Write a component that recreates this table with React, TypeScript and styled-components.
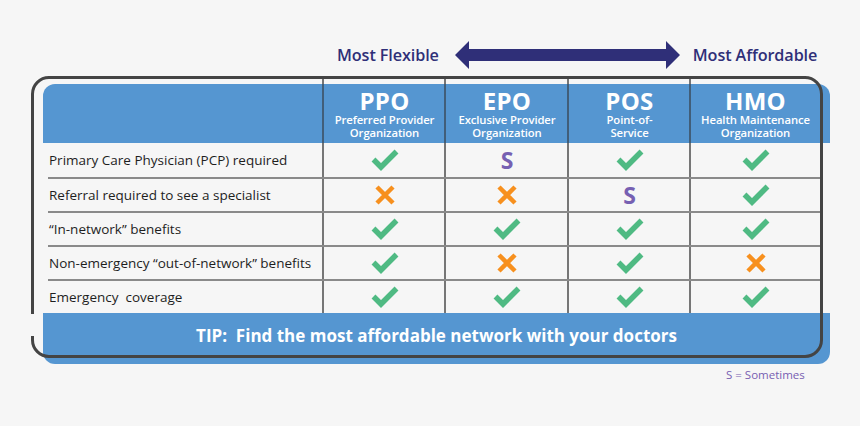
import React from "react";
import styled, { createGlobalStyle } from "styled-components";

const GlobalStyle = createGlobalStyle`
  html, body { margin: 0; padding: 0; background: #f6f6f6; }
  body { font-family: "Open Sans", "Liberation Sans", sans-serif; }
`;

const BLUE = "#5596d1";
const BG = "#f6f6f6";
const NAVY = "#2f2f78";
const GREEN = "#4fba83";
const ORANGE = "#f7901e";
const PURPLE = "#7660b2";
const VLINE = "#767676";
const HLINE = "#8a8a8a";

const COLS = "280px 122px 123px 122px 130px";

const Page = styled.div`
  width: 860px;
  height: 426px;
  padding-top: 40px;
  box-sizing: border-box;
  overflow: hidden;
`;

const Legend = styled.div`
  display: flex;
  align-items: center;
  height: 30px;
  padding-left: 337px;
`;

const LegendText = styled.span`
  font-size: 16.2px;
  font-weight: 600;
  color: ${NAVY};
  letter-spacing: -0.1px;
`;

const ArrowSvg = styled.svg`
  display: block;
  margin: 0 13px 0 16px;
`;

const TableWrap = styled.div`
  position: relative;
  margin: 14px 0 0 43px;
  width: 787px;
`;

const Frame = styled.div`
  position: absolute;
  left: -12px;
  top: -8px;
  width: 792px;
  height: 282px;
  box-sizing: border-box;
  border: 3px solid #444;
  border-radius: 18px;
  pointer-events: none;
  z-index: 3;
`;

const FrameGap = styled.div`
  position: absolute;
  left: -14px;
  top: 230px;
  width: 6px;
  height: 22px;
  background: ${BG};
  z-index: 4;
`;

const Header = styled.div`
  display: grid;
  grid-template-columns: ${COLS};
  padding-right: 10px;
  height: 59px;
  background: ${BLUE};
  border-radius: 12px 12px 0 0;
`;

const HeadCell = styled.div<{ $first?: boolean }>`
  position: relative;
  display: flex;
  flex-direction: column;
  align-items: center;
  color: #fff;
  padding-top: 4px;
  ${(p) =>
    !p.$first &&
    `
    border-left: 2px solid rgba(50,50,50,0.55);
    margin-left: -1px;
    &::before {
      content: "";
      position: absolute;
      left: -2px;
      top: -6px;
      width: 2px;
      height: 6px;
      background: ${VLINE};
    }
  `}
`;

const Plan = styled.div`
  font-size: 24px;
  font-weight: 700;
  line-height: 25px;
  letter-spacing: 0.3px;
`;

const PlanSub = styled.div`
  font-size: 11.3px;
  font-weight: 600;
  line-height: 13px;
  text-align: center;
  letter-spacing: -0.1px;
  white-space: pre;
`;

const Body = styled.div`
  display: flex;
  flex-direction: column;
`;

const Row = styled.div<{ $h: number; $last?: boolean }>`
  display: grid;
  grid-template-columns: 275px 122px 123px 122px 130px;
  height: ${(p) => p.$h}px;
  margin: 0 10px 0 5px;
  border-bottom: ${(p) => (p.$last ? "none" : `2px solid ${HLINE}`)};
  box-sizing: border-box;
`;

const Label = styled.div`
  display: flex;
  align-items: center;
  padding-left: 1px;
  font-size: 13.5px;
  color: #1e1e1e;
  white-space: pre;
`;

const Cell = styled.div`
  display: flex;
  align-items: center;
  justify-content: center;
  border-left: 2px solid ${VLINE};
  margin-left: -1px;
`;

const Sometimes = styled.span`
  font-size: 23px;
  font-weight: 700;
  color: ${PURPLE};
  line-height: 1;
`;

const Tip = styled.div`
  height: 51px;
  background: ${BLUE};
  border-radius: 0 0 12px 12px;
  display: flex;
  align-items: center;
  justify-content: center;
  color: #fff;
  font-size: 17px;
  font-weight: 700;
  white-space: pre;
  padding-bottom: 6px;
  box-sizing: border-box;
`;

const Note = styled.div`
  margin: 3px 0 0 726px;
  font-size: 11.5px;
  color: ${PURPLE};
`;

type Mark = "y" | "n" | "s";

const Check = () => (
  <svg width="28" height="22" viewBox="0 0 28 22">
    <path d="M2.5 10.5 L10 18 L25.5 2.5" fill="none" stroke={GREEN} strokeWidth="5.5" strokeLinejoin="miter" />
  </svg>
);

const Cross = () => (
  <svg width="20" height="20" viewBox="0 0 20 20">
    <path d="M2 2 L18 18 M18 2 L2 18" fill="none" stroke={ORANGE} strokeWidth="4.5" />
  </svg>
);

const MarkIcon = ({ m }: { m: Mark }) =>
  m === "y" ? <Check /> : m === "n" ? <Cross /> : <Sometimes>S</Sometimes>;

const plans = [
  { name: "PPO", sub: "Preferred Provider\nOrganization" },
  { name: "EPO", sub: "Exclusive Provider\nOrganization" },
  { name: "POS", sub: "Point-of-\nService" },
  { name: "HMO", sub: "Health Maintenance\nOrganization" },
];

const rows: { label: string; marks: Mark[]; h: number }[] = [
  { label: "Primary Care Physician (PCP) required", marks: ["y", "s", "y", "y"], h: 36 },
  { label: "Referral required to see a specialist", marks: ["n", "n", "s", "y"], h: 34 },
  { label: "\u201cIn-network\u201d benefits", marks: ["y", "y", "y", "y"], h: 34 },
  { label: "Non-emergency \u201cout-of-network\u201d benefits", marks: ["y", "n", "y", "n"], h: 34 },
  { label: "Emergency  coverage", marks: ["y", "y", "y", "y"], h: 32 },
];

export default function App() {
  return (
    <>
      <GlobalStyle />
      <Page>
        <Legend>
          <LegendText>Most Flexible</LegendText>
          <ArrowSvg width="225" height="30" viewBox="0 0 225 30">
            <polygon
              points="0,15 14,1 14,9 211,9 211,1 225,15 211,29 211,21 14,21 14,29"
              fill={NAVY}
            />
          </ArrowSvg>
          <LegendText>Most Affordable</LegendText>
        </Legend>
        <TableWrap>
          <Frame />
          <FrameGap />
          <Header>
            <HeadCell $first />
            {plans.map((p) => (
              <HeadCell key={p.name}>
                <Plan>{p.name}</Plan>
                <PlanSub>{p.sub}</PlanSub>
              </HeadCell>
            ))}
          </Header>
          <Body>
            {rows.map((r, i) => (
              <Row key={r.label} $h={r.h} $last={i === rows.length - 1}>
                <Label>{r.label}</Label>
                {r.marks.map((m, j) => (
                  <Cell key={j}>
                    <MarkIcon m={m} />
                  </Cell>
                ))}
              </Row>
            ))}
          </Body>
          <Tip>TIP:  Find the most affordable network with your doctors</Tip>
        </TableWrap>
        <Note>S = Sometimes</Note>
      </Page>
    </>
  );
}
